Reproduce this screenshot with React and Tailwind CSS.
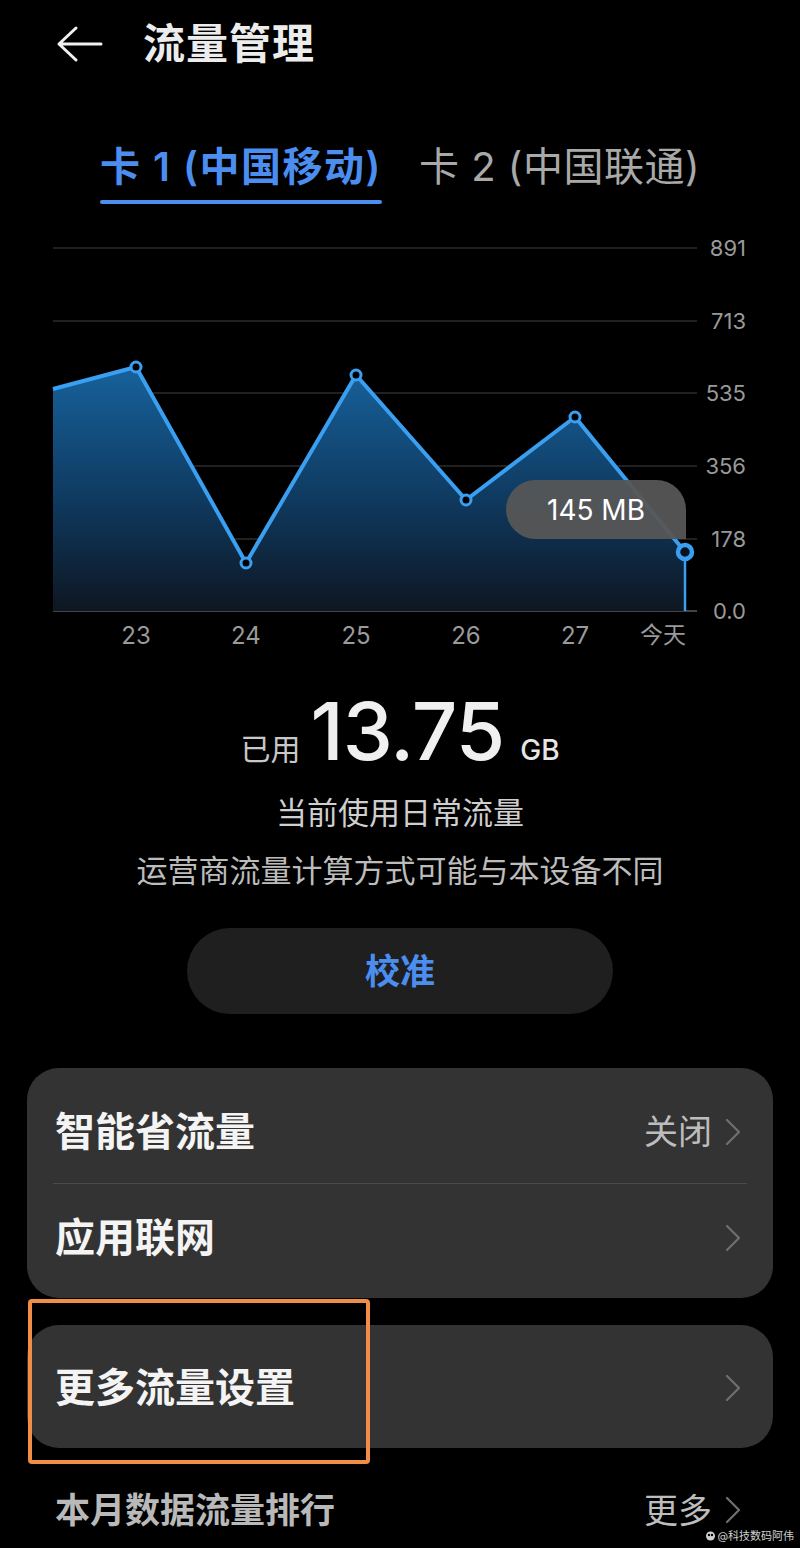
import React from "react";

const points = [
  [53, 389],
  [136, 367],
  [246, 563],
  [356, 375],
  [466, 500],
  [575, 417],
  [685, 552],
];

const yTicks = [
  { y: 248, label: "891" },
  { y: 321, label: "713" },
  { y: 393, label: "535" },
  { y: 466, label: "356" },
  { y: 539, label: "178" },
  { y: 611, label: "0.0" },
];

const xTicks = [
  { x: 136, label: "23" },
  { x: 246, label: "24" },
  { x: 356, label: "25" },
  { x: 466, label: "26" },
  { x: 575, label: "27" },
];

function Chevron({ className = "" }) {
  return (
    <svg width="18" height="28" viewBox="0 0 18 28" className={className}>
      <path d="M3 2 L15 14 L3 26" fill="none" stroke="#6f6f6f" strokeWidth="2.2" strokeLinecap="round" strokeLinejoin="round" />
    </svg>
  );
}

function UsageChart() {
  const line = points.map((p, i) => `${i === 0 ? "M" : "L"}${p[0]} ${p[1]}`).join(" ");
  const area = `${line} L685 611 L53 611 Z`;

  return (
    <div className="relative h-[425px] w-full">
      <svg width="800" height="425" viewBox="0 230 800 425" className="block">
        <defs>
          <linearGradient id="fillGrad" x1="0" y1="360" x2="0" y2="611" gradientUnits="userSpaceOnUse">
            <stop offset="0" stopColor="#17649f" />
            <stop offset="0.55" stopColor="#0f3a60" />
            <stop offset="1" stopColor="#0e1622" />
          </linearGradient>
        </defs>

        {yTicks.map((t) => (
          <line key={t.label} x1="53" x2="697" y1={t.y} y2={t.y} stroke={t.y === 611 ? "#5a5a5a" : "#2c2c2c"} strokeWidth="1.5" />
        ))}

        <path d={area} fill="url(#fillGrad)" />
        <path d={line} fill="none" stroke="#3a9ff0" strokeWidth="4" strokeLinejoin="round" />
        <line x1="685" x2="685" y1="552" y2="611" stroke="#3a9ff0" strokeWidth="2.5" />

        {points.slice(1, 6).map((p) => (
          <circle key={p[0]} cx={p[0]} cy={p[1]} r="5" fill="#000" stroke="#3a9ff0" strokeWidth="3" />
        ))}
        <circle cx="685" cy="552" r="7" fill="#06121d" stroke="#3a9ff0" strokeWidth="4.5" />

        {yTicks.map((t) => (
          <text key={t.label} x="746" y={t.y + 8} textAnchor="end" fontSize="22" fill="#999999">
            {t.label}
          </text>
        ))}
        {xTicks.map((t) => (
          <text key={t.label} x={t.x} y="644" textAnchor="middle" fontSize="24" fill="#9a9a9a">
            {t.label}
          </text>
        ))}
        <text x="686" y="643" textAnchor="end" fontSize="23" fill="#9a9a9a">
          今天
        </text>
      </svg>

      {/* tooltip */}
      <div className="absolute left-[506px] top-[250px] flex h-[59px] w-[180px] items-center justify-center rounded-t-[30px] rounded-bl-[30px] bg-[#565656]/95 text-[28px] text-white">
        145 MB
      </div>
    </div>
  );
}

export default function App() {
  return (
    <div className="relative h-[1548px] w-[800px] overflow-hidden bg-black font-['Inter','Noto_Sans_CJK_SC',sans-serif] text-white">
      {/* Header */}
      <div className="flex h-[88px] items-center pl-[56px]">
        <svg width="48" height="44" viewBox="0 0 48 44">
          <path d="M20 6 L3 22 L20 38 M3 22 L45 22" fill="none" stroke="#f2f2f2" strokeWidth="3" strokeLinecap="round" strokeLinejoin="round" />
        </svg>
        <h1 className="ml-[39px] text-[42px] font-bold leading-none tracking-[1px] text-[#ececec]">流量管理</h1>
      </div>

      {/* SIM tabs */}
      <div className="mt-[57px] flex justify-center gap-[37px]">
        <div className="flex flex-col">
          <span className="text-[40px] font-semibold leading-[44px] tracking-[1.5px] text-[#4b8ef0]">卡 1 (中国移动)</span>
          <div className="mt-[11px] h-[4px] rounded-full bg-[#4b8ef0]" />
        </div>
        <span className="text-[40px] leading-[44px] tracking-[0.5px] text-[#a9a9a9]">卡 2 (中国联通)</span>
      </div>

      <div className="mt-[26px]">
        <UsageChart />
      </div>

      {/* Usage summary */}
      <div className="mt-[36px] flex items-baseline justify-center">
        <span className="text-[30px] text-[#c8c8c8]">已用</span>
        <span className="ml-[10px] text-[80px] font-medium leading-none tracking-[-1px] text-[#f0f0f0]">13.75</span>
        <span className="ml-[16px] text-[28px] font-medium text-[#e6e6e6]">GB</span>
      </div>
      <p className="mt-[21px] text-center text-[31px] leading-[40px] text-[#cfcfcf]">当前使用日常流量</p>
      <p className="mt-[18px] text-center text-[31px] leading-[40px] text-[#bcbcbc]">运营商流量计算方式可能与本设备不同</p>

      <div className="mt-[37px] flex justify-center">
        <button className="flex h-[86px] w-[426px] items-center justify-center rounded-full bg-[#1f1f1f] text-[35px] font-bold text-[#4b8ef0]">
          校准
        </button>
      </div>

      {/* Settings cards */}
      <div className="mx-[27px] mt-[54px] rounded-[32px] bg-[#333333]">
        <div className="flex h-[115px] items-center justify-between pl-[28px] pr-[31px] pt-[12px]">
          <span className="text-[40px] font-bold text-[#f4f4f4]">智能省流量</span>
          <div className="flex items-center gap-[12px]">
            <span className="text-[34px] text-[#bdbdbd]">关闭</span>
            <Chevron />
          </div>
        </div>
        <div className="mx-[26px] h-px bg-[#4a4a4a]" />
        <div className="flex h-[114px] items-center justify-between pb-[6px] pl-[28px] pr-[31px]">
          <span className="text-[40px] font-bold text-[#f4f4f4]">应用联网</span>
          <Chevron />
        </div>
      </div>

      <div className="relative mx-[27px] mt-[27px]">
        <div className="flex h-[123px] items-center justify-between rounded-[32px] bg-[#333333] pl-[28px] pr-[31px] pt-[3px]">
          <span className="text-[40px] font-bold text-[#f4f4f4]">更多流量设置</span>
          <Chevron />
        </div>
        {/* highlight box */}
        <div className="absolute left-[1px] top-[-26px] h-[165px] w-[342px] rounded-[4px] border-[4px] border-[#f08d46]" />
      </div>

      <div className="mx-[27px] mt-[40px] flex h-[44px] items-center justify-between pl-[28px] pr-[31px]">
        <span className="text-[35px] font-bold text-[#b9b9b9]">本月数据流量排行</span>
        <div className="flex items-center gap-[12px]">
          <span className="text-[34px] text-[#bdbdbd]">更多</span>
          <Chevron />
        </div>
      </div>

      {/* watermark */}
      <div className="absolute bottom-[4px] right-[6px] flex items-center gap-[1px] text-[11px] text-[#d0d0d0]">
        <svg width="11" height="11" viewBox="0 0 11 11">
          <circle cx="5.5" cy="6" r="4.5" fill="#d0d0d0" />
          <circle cx="4" cy="5" r="1.2" fill="#000" />
          <circle cx="7" cy="5" r="1.2" fill="#000" />
        </svg>
        <span>@科技数码阿伟</span>
      </div>
    </div>
  );
}
